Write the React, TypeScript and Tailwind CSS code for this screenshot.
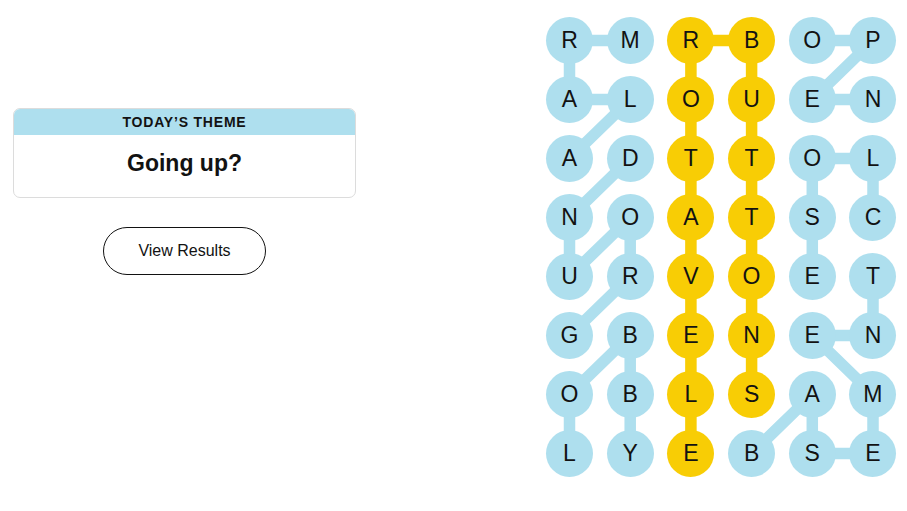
import React from "react"

const letters = [
  "RMRBOP",
  "ALOUEN",
  "ADTTOL",
  "NOATSC",
  "URVOET",
  "GBENEN",
  "OBLSAM",
  "LYEBSE",
]

// cells that belong to the spangram
const spangram = [
  [7, 2], [6, 2], [5, 2], [4, 2], [3, 2], [2, 2], [1, 2], [0, 2],
  [0, 3], [1, 3], [2, 3], [3, 3], [4, 3], [5, 3], [6, 3],
]

const words: number[][][] = [
  // ALARM
  [[2, 0], [1, 1], [1, 0], [0, 0], [0, 1]],
  // GROUND
  [[5, 0], [4, 1], [3, 1], [4, 0], [3, 0], [2, 1]],
  // LOBBY
  [[7, 0], [6, 0], [5, 1], [6, 1], [7, 1]],
  // OPEN
  [[0, 4], [0, 5], [1, 4], [1, 5]],
  // CLOSE
  [[3, 5], [2, 5], [2, 4], [3, 4], [4, 4]],
  // BASEMENT
  [[7, 3], [6, 4], [7, 4], [7, 5], [6, 5], [5, 4], [5, 5], [4, 5]],
]

const COL = 60.7
const ROW = 59
const R = 23.5

const cx = (c: number) => c * COL + R
const cy = (r: number) => r * ROW + R

function Path({ cells, color }: { cells: number[][]; color: string }) {
  const pts = cells.map(([r, c]) => `${cx(c)},${cy(r)}`).join(" ")
  return <polyline points={pts} fill="none" stroke={color} strokeWidth={11.5} strokeLinejoin="round" />
}

function Board() {
  const isSpan = (r: number, c: number) => spangram.some(([a, b]) => a === r && b === c)
  return (
    <div className="relative">
      <svg className="absolute left-0 top-0" width={351} height={460}>
        {words.map((w, i) => (
          <Path key={i} cells={w} color="#aedfee" />
        ))}
        <Path cells={spangram} color="#f8cd05" />
      </svg>
      <div className="relative grid grid-cols-[repeat(6,47px)] gap-x-[13.7px] gap-y-[12px]">
        {letters.map((row, r) =>
          row.split("").map((ch, c) => (
            <div
              key={`${r}-${c}`}
              className={`flex h-[47px] w-[47px] items-center justify-center rounded-full text-[23px] leading-none text-[#121212] ${
                isSpan(r, c) ? "bg-[#f8cd05]" : "bg-[#aedfee]"
              }`}
            >
              {ch}
            </div>
          ))
        )}
      </div>
    </div>
  )
}

export default function App() {
  return (
    <div className="flex h-[511px] w-[907px] bg-white font-['Liberation_Sans',Arial,sans-serif] text-[#121212]">
      <div className="flex w-[370px] flex-col items-center pl-[13px] pr-[14px] pt-[108px]">
        <div className="w-[343px] overflow-hidden rounded-[7px] border border-[#dcdcdc]">
          <div className="flex h-[26px] items-center justify-center bg-[#aedfee] text-[14px] font-semibold tracking-[0.8px] uppercase">
            Today’s Theme
          </div>
          <div className="flex h-[62px] items-center justify-center pb-[5px] text-[23px] font-bold">
            Going up?
          </div>
        </div>
        <button className="mt-[29px] h-[48px] w-[163px] rounded-full border border-[#121212] bg-white text-[16px]">
          View Results
        </button>
      </div>
      <div className="ml-[176px] mt-[16.5px]">
        <Board />
      </div>
    </div>
  )
}
